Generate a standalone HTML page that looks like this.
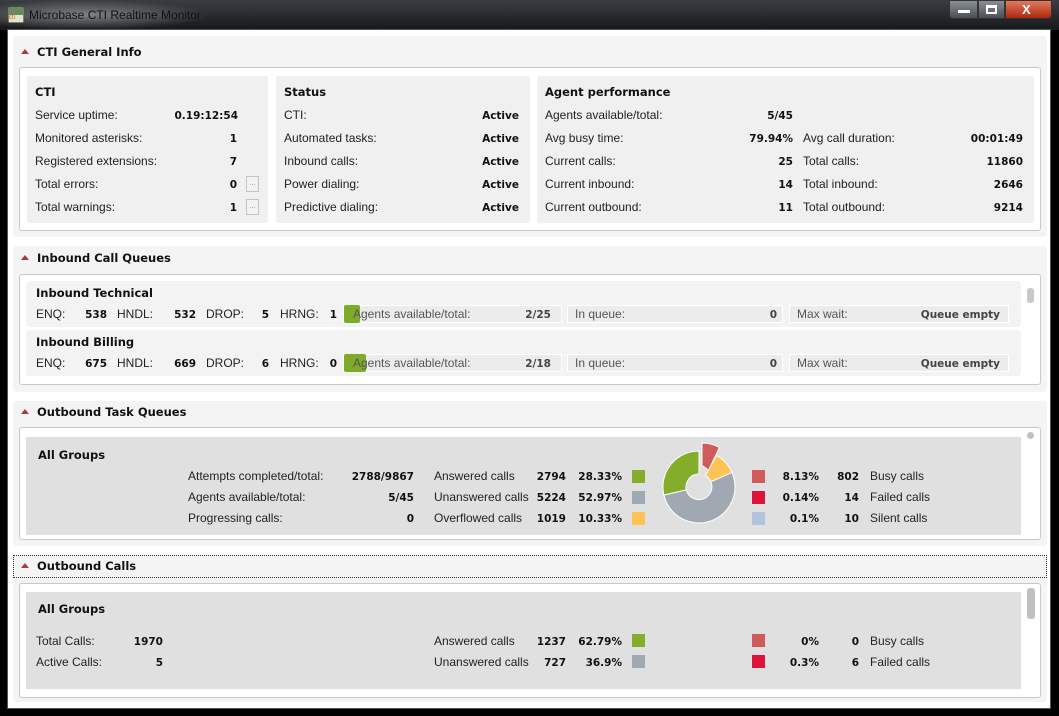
<!DOCTYPE html>
<html><head><meta charset="utf-8"><style>
*{margin:0;padding:0;box-sizing:border-box}
body{width:1059px;height:716px;position:relative;overflow:hidden;background:#000;font-family:"Liberation Sans",sans-serif;font-size:12px;color:#222}
div,span,i,b,svg{position:absolute}
i{font-style:normal;white-space:nowrap;line-height:14px;margin-top:-7px}
b{font-family:"DejaVu Sans",sans-serif;font-weight:bold;font-size:10.5px;white-space:nowrap;line-height:14px;margin-top:-6px;color:#111}
i.h{font-family:"DejaVu Sans",sans-serif;font-weight:bold;font-size:11.5px;color:#111}
.panel{background:#f4f4f4;border-radius:4px}
.box{background:#fff;border:1px solid #c8c8c8;border-radius:3px}
.card{background:#f0f0f0;border-radius:3px}
.gcard{background:#e0e0e0}
.tri{width:0;height:0;border-left:4px solid transparent;border-right:4px solid transparent;border-bottom:5px solid #b03a3a}
.ib{background:#ececec;border:1px solid #fff;height:18px}
.btn{width:13px;height:16px;border:1px solid #c4c4c4;background:#f2f2f2;font-size:8px;color:#999;text-align:center;line-height:12px}
.sw{width:13px;height:13px}
</style></head><body>
<div style="left:0;top:0;width:1059px;height:30px;background:linear-gradient(#3a3d42,#17191c)"></div>
<div style="left:0;top:0;width:210px;height:30px;background:radial-gradient(ellipse at 40% 50%,rgba(200,200,200,.55),rgba(0,0,0,0) 70%)"></div>
<div style="left:8px;top:7px;width:16px;height:16px;background:#6a8a5a;border-radius:2px"></div>
<div style="left:9px;top:15px;width:14px;height:7px;background:#e8e0d0;font-size:6px;color:#c60;line-height:7px">cti</div>
<i style="left:29px;top:15px;font-size:12px;color:#111">Microbase CTI Realtime Monitor</i>
<div style="left:949px;top:0;width:29px;height:19px;background:linear-gradient(#8a8f96,#4a4f56);border:1px solid #333;border-radius:0 0 0 4px"></div>
<div style="left:958px;top:10px;width:12px;height:3px;background:#fff"></div>
<div style="left:978px;top:0;width:27px;height:19px;background:linear-gradient(#8a8f96,#4a4f56);border:1px solid #333"></div>
<div style="left:986px;top:5px;width:11px;height:9px;border:2px solid #fff;border-top-width:3px"></div>
<div style="left:1005px;top:0;width:47px;height:19px;background:linear-gradient(#e07a60,#b0280e);border:1px solid #333;border-radius:0 0 4px 0"></div>
<i style="left:1022px;top:10px;color:#fff;font-weight:bold;font-size:13px">X</i>
<div style="left:7px;top:29px;width:1044px;height:680px;background:#fff;border:1px solid #555"></div>

<div class="panel" style="left:13px;top:36px;width:1034px;height:201px"></div>
<div class="tri" style="left:21px;top:49px"></div>
<i class="h" style="left:37px;top:52px">CTI General Info</i>
<div class="box" style="left:19px;top:67px;width:1022px;height:164px"></div>
<div class="card" style="left:27px;top:76px;width:241px;height:147px"></div>
<div class="card" style="left:276px;top:76px;width:254px;height:147px"></div>
<div class="card" style="left:537px;top:76px;width:497px;height:147px"></div>
<i class="h" style="left:35px;top:92px">CTI</i>
<i style="left:35px;top:115px">Service uptime:</i><b style="right:821px;top:115px">0.19:12:54</b>
<i style="left:35px;top:138px">Monitored asterisks:</i><b style="right:822px;top:138px">1</b>
<i style="left:35px;top:161px">Registered extensions:</i><b style="right:822px;top:161px">7</b>
<i style="left:35px;top:184px">Total errors:</i><b style="right:822px;top:184px">0</b><div class="btn" style="left:246px;top:176px">...</div>
<i style="left:35px;top:207px">Total warnings:</i><b style="right:822px;top:207px">1</b><div class="btn" style="left:246px;top:199px">...</div>
<i class="h" style="left:284px;top:92px">Status</i>
<i style="left:284px;top:115px">CTI:</i><b style="right:540px;top:115px">Active</b>
<i style="left:284px;top:138px">Automated tasks:</i><b style="right:540px;top:138px">Active</b>
<i style="left:284px;top:161px">Inbound calls:</i><b style="right:540px;top:161px">Active</b>
<i style="left:284px;top:184px">Power dialing:</i><b style="right:540px;top:184px">Active</b>
<i style="left:284px;top:207px">Predictive dialing:</i><b style="right:540px;top:207px">Active</b>
<i class="h" style="left:545px;top:92px">Agent performance</i>
<i style="left:545px;top:115px">Agents available/total:</i><b style="right:266px;top:115px">5/45</b>
<i style="left:545px;top:138px">Avg busy time:</i><b style="right:266px;top:138px">79.94%</b>
<i style="left:545px;top:161px">Current calls:</i><b style="right:266px;top:161px">25</b>
<i style="left:545px;top:184px">Current inbound:</i><b style="right:266px;top:184px">14</b>
<i style="left:545px;top:207px">Current outbound:</i><b style="right:266px;top:207px">11</b>
<i style="left:803px;top:138px">Avg call duration:</i><b style="right:36px;top:138px">00:01:49</b>
<i style="left:803px;top:161px">Total calls:</i><b style="right:36px;top:161px">11860</b>
<i style="left:803px;top:184px">Total inbound:</i><b style="right:36px;top:184px">2646</b>
<i style="left:803px;top:207px">Total outbound:</i><b style="right:36px;top:207px">9214</b>

<div class="panel" style="left:13px;top:246px;width:1034px;height:146px"></div>
<div class="tri" style="left:21px;top:255px"></div>
<i class="h" style="left:37px;top:258px">Inbound Call Queues</i>
<div class="box" style="left:19px;top:274px;width:1022px;height:111px"></div>
<div style="left:1027px;top:288px;width:7px;height:15px;background:#c8c8c8;border-radius:3px"></div>
<div class="card" style="left:26px;top:281px;width:995px;height:46px;background:#f3f3f3"></div>
<div class="card" style="left:26px;top:330px;width:995px;height:46px;background:#f3f3f3"></div>
<i class="h" style="left:36px;top:293px">Inbound Technical</i>
<i style="left:36px;top:314px">ENQ:</i><b style="right:952px;top:314px">538</b>
<i style="left:117px;top:314px">HNDL:</i><b style="right:863px;top:314px">532</b>
<i style="left:206px;top:314px">DROP:</i><b style="right:790px;top:314px">5</b>
<i style="left:280px;top:314px">HRNG:</i><b style="right:722px;top:314px">1</b>
<div class="ib" style="left:343px;top:305px;width:219px"></div>
<div style="left:344px;top:305px;width:16px;height:18px;background:#7fab2a;border-radius:2px"></div>
<i style="left:353px;top:314px;color:#555">Agents available/total:</i><b style="right:508px;top:314px;color:#444">2/25</b>
<div class="ib" style="left:567px;top:305px;width:216px"></div>
<i style="left:575px;top:314px;color:#555">In queue:</i><b style="right:282px;top:314px;color:#444">0</b>
<div class="ib" style="left:789px;top:305px;width:220px"></div>
<i style="left:797px;top:314px;color:#555">Max wait:</i><b style="right:59px;top:314px;color:#444">Queue empty</b>
<i class="h" style="left:36px;top:342px">Inbound Billing</i>
<i style="left:36px;top:363px">ENQ:</i><b style="right:952px;top:363px">675</b>
<i style="left:117px;top:363px">HNDL:</i><b style="right:863px;top:363px">669</b>
<i style="left:206px;top:363px">DROP:</i><b style="right:790px;top:363px">6</b>
<i style="left:280px;top:363px">HRNG:</i><b style="right:722px;top:363px">0</b>
<div class="ib" style="left:343px;top:354px;width:219px"></div>
<div style="left:344px;top:354px;width:22px;height:18px;background:#7fab2a;border-radius:2px"></div>
<i style="left:353px;top:363px;color:#555">Agents available/total:</i><b style="right:508px;top:363px;color:#444">2/18</b>
<div class="ib" style="left:567px;top:354px;width:216px"></div>
<i style="left:575px;top:363px;color:#555">In queue:</i><b style="right:282px;top:363px;color:#444">0</b>
<div class="ib" style="left:789px;top:354px;width:220px"></div>
<i style="left:797px;top:363px;color:#555">Max wait:</i><b style="right:59px;top:363px;color:#444">Queue empty</b>

<div class="panel" style="left:13px;top:401px;width:1034px;height:145px"></div>
<div class="tri" style="left:21px;top:409px"></div>
<i class="h" style="left:37px;top:412px">Outbound Task Queues</i>
<div class="box" style="left:19px;top:427px;width:1022px;height:113px"></div>
<div style="left:1027px;top:432px;width:7px;height:7px;background:#c0c0c0;border-radius:50%"></div>
<div class="gcard" style="left:26px;top:437px;width:995px;height:98px"></div>
<i class="h" style="left:38px;top:455px">All Groups</i>
<i style="left:188px;top:476px">Attempts completed/total:</i><b style="right:645px;top:476px">2788/9867</b>
<i style="left:188px;top:497px">Agents available/total:</i><b style="right:645px;top:497px">5/45</b>
<i style="left:188px;top:518px">Progressing calls:</i><b style="right:645px;top:518px">0</b>
<i style="left:434px;top:476px">Answered calls</i><b style="right:493px;top:476px">2794</b><b style="right:437px;top:476px">28.33%</b><div class="sw" style="left:632px;top:470px;background:#83ad2b"></div>
<i style="left:434px;top:497px">Unanswered calls</i><b style="right:493px;top:497px">5224</b><b style="right:437px;top:497px">52.97%</b><div class="sw" style="left:632px;top:491px;background:#a0a8b2"></div>
<i style="left:434px;top:518px">Overflowed calls</i><b style="right:493px;top:518px">1019</b><b style="right:437px;top:518px">10.33%</b><div class="sw" style="left:632px;top:512px;background:#ffc355"></div>
<div class="sw" style="left:752px;top:470px;background:#cf5b5b"></div><b style="right:240px;top:476px">8.13%</b><b style="right:200px;top:476px">802</b><i style="left:870px;top:476px">Busy calls</i>
<div class="sw" style="left:752px;top:491px;background:#dc143c"></div><b style="right:240px;top:497px">0.14%</b><b style="right:200px;top:497px">14</b><i style="left:870px;top:497px">Failed calls</i>
<div class="sw" style="left:752px;top:512px;background:#b0c4de"></div><b style="right:240px;top:518px">0.1%</b><b style="right:200px;top:518px">10</b><i style="left:870px;top:518px">Silent calls</i>
<svg style="left:0;top:0" width="1059" height="716">
<g stroke="#fff" stroke-width="1">
<path d="M663.9,495.1 A36,36 0 0 1 699,451 L699,474 A13,13 0 0 0 686.3,489.9 Z" fill="#83ad2b"/>
<path d="M731.9,472.4 A36,36 0 1 1 663.9,495.1 L686.3,489.9 A13,13 0 1 0 710.9,481.7 Z" fill="#a0a8b2"/>
<path d="M716.5,455.5 A36,36 0 0 1 731.9,472.4 L710.9,481.7 A13,13 0 0 0 705.3,475.6 Z" fill="#ffc355"/>
<path d="M702,443 A36,36 0 0 1 719.5,447.5 L708.3,470.6 A13,13 0 0 0 702,466 Z" fill="#cf5b5b"/>
<path d="M699,605 A36,36 0 0 1 725.3,665.6 L710,651.2 A15,15 0 0 0 699,626 Z" fill="#a0a8b2"/>
<path d="M725.3,665.6 A36,36 0 1 1 699,605 L699,626 A15,15 0 1 0 710,651.2 Z" fill="#83ad2b"/>
<line x1="699" y1="596" x2="699" y2="605"/>
</g>
</svg>

<div class="panel" style="left:13px;top:555px;width:1034px;height:147px"></div>
<div style="left:13px;top:555px;width:1034px;height:23px;border:1px dotted #333"></div>
<div class="tri" style="left:21px;top:563px"></div>
<i class="h" style="left:37px;top:566px">Outbound Calls</i>
<div class="box" style="left:19px;top:583px;width:1022px;height:115px"></div>
<div style="left:1027px;top:588px;width:8px;height:31px;background:#c0c0c0;border-radius:3px"></div>
<div class="gcard" style="left:26px;top:592px;width:995px;height:97px"></div>
<i class="h" style="left:38px;top:609px">All Groups</i>
<i style="left:36px;top:641px">Total Calls:</i><b style="right:896px;top:641px">1970</b>
<i style="left:36px;top:662px">Active Calls:</i><b style="right:896px;top:662px">5</b>
<i style="left:434px;top:641px">Answered calls</i><b style="right:493px;top:641px">1237</b><b style="right:437px;top:641px">62.79%</b><div class="sw" style="left:632px;top:634px;background:#83ad2b"></div>
<i style="left:434px;top:662px">Unanswered calls</i><b style="right:493px;top:662px">727</b><b style="right:437px;top:662px">36.9%</b><div class="sw" style="left:632px;top:655px;background:#a0a8b2"></div>
<div class="sw" style="left:752px;top:634px;background:#cf5b5b"></div><b style="right:240px;top:641px">0%</b><b style="right:200px;top:641px">0</b><i style="left:870px;top:641px">Busy calls</i>
<div class="sw" style="left:752px;top:655px;background:#dc143c"></div><b style="right:240px;top:662px">0.3%</b><b style="right:200px;top:662px">6</b><i style="left:870px;top:662px">Failed calls</i>
</body></html>
